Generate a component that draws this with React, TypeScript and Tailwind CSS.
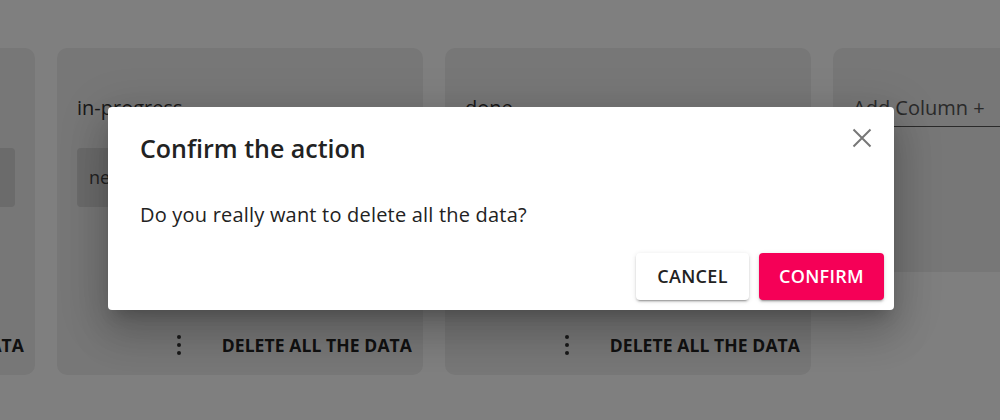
import React from "react";

const columns = [
  { title: "todo", tasks: ["new task"] },
  { title: "in-progress", tasks: ["new task"] },
  { title: "done", tasks: [] as string[] },
];

function DotsIcon() {
  return (
    <svg width="24" height="24" viewBox="0 0 24 24" fill="currentColor">
      <circle cx="12" cy="4" r="2" />
      <circle cx="12" cy="12" r="2" />
      <circle cx="12" cy="20" r="2" />
    </svg>
  );
}

function Column({ title, tasks }: { title: string; tasks: string[] }) {
  return (
    <div className="w-[366px] h-[327px] shrink-0 rounded-[10px] bg-[#eeeeee] pl-5 pr-[8px] pt-[46px] pb-[8px] flex flex-col">
      <div className="text-[20px] leading-[28px] text-[#333]">{title}</div>
      <div className="mt-[26px] mr-[12px] flex flex-col gap-2 flex-1">
        {tasks.map((t, i) => (
          <div
            key={i}
            className="h-[59px] rounded-[4px] bg-[#d6d6d6] px-[12px] flex items-center text-[18px] text-[#444]"
          >
            {t}
          </div>
        ))}
      </div>
      <div className="flex items-center justify-end gap-[18px]">
        <button className="w-[44px] h-[44px] flex items-center justify-center text-[#333]">
          <DotsIcon />
        </button>
        <button className="px-[3px] py-1 text-[17.5px] font-bold tracking-[0.1px] text-[#222] uppercase">
          Delete all the data
        </button>
      </div>
    </div>
  );
}

export default function App() {
  return (
    <div
      className="relative w-[1000px] h-[420px] overflow-hidden bg-white"
      style={{ fontFamily: '"Open Sans", "Noto Sans", sans-serif' }}
    >
      <div className="flex gap-[22px] pt-[48px] ml-[-331px]">
        {columns.map((c) => (
          <Column key={c.title} title={c.title} tasks={c.tasks} />
        ))}
        <div className="w-[366px] h-[224px] shrink-0 rounded-[10px] bg-[#eeeeee] px-5 pt-[46px]">
          <input
            placeholder="Add Column +"
            className="w-full bg-transparent border-b border-[#555] pb-[4px] text-[20px] leading-[28px] text-[#333] placeholder:text-[#555] outline-none"
          />
        </div>
      </div>

      <div className="absolute inset-0 bg-black/50" />

      <div className="absolute left-[108px] top-[107px] w-[786px] h-[203px] bg-white rounded-[4px] shadow-[0_11px_15px_-7px_rgba(0,0,0,0.2),0_24px_38px_3px_rgba(0,0,0,0.14),0_9px_46px_8px_rgba(0,0,0,0.12)] flex flex-col">
        <div className="flex items-start justify-between pl-8 pr-[18px] pt-[24px]">
          <h2 className="text-[25px] leading-[34px] font-semibold text-[#222]">Confirm the action</h2>
          <button className="mt-[-7px] w-[28px] h-[28px] flex items-center justify-center text-[#777]">
            <svg width="20" height="20" viewBox="0 0 20 20" fill="none" stroke="currentColor" strokeWidth="2">
              <path d="M1.5 1.5L18.5 18.5M18.5 1.5L1.5 18.5" />
            </svg>
          </button>
        </div>
        <p className="pl-8 mt-[36px] text-[20px] leading-[28px] tracking-[0.2px] text-[#222]">
          Do you really want to delete all the data?
        </p>
        <div className="mt-auto mb-[10px] mr-[10px] flex justify-end gap-[10px]">
          <button className="w-[113px] h-[47px] rounded-[4px] bg-white text-[18px] font-semibold tracking-[0.3px] text-[#222] shadow-[0_3px_1px_-2px_rgba(0,0,0,0.2),0_2px_2px_0_rgba(0,0,0,0.14),0_1px_5px_0_rgba(0,0,0,0.12)]">
            CANCEL
          </button>
          <button className="w-[125px] h-[47px] rounded-[4px] bg-[#f50057] text-[18px] font-semibold tracking-[0.3px] text-white shadow-[0_3px_1px_-2px_rgba(0,0,0,0.2),0_2px_2px_0_rgba(0,0,0,0.14),0_1px_5px_0_rgba(0,0,0,0.12)]">
            CONFIRM
          </button>
        </div>
      </div>
    </div>
  );
}
